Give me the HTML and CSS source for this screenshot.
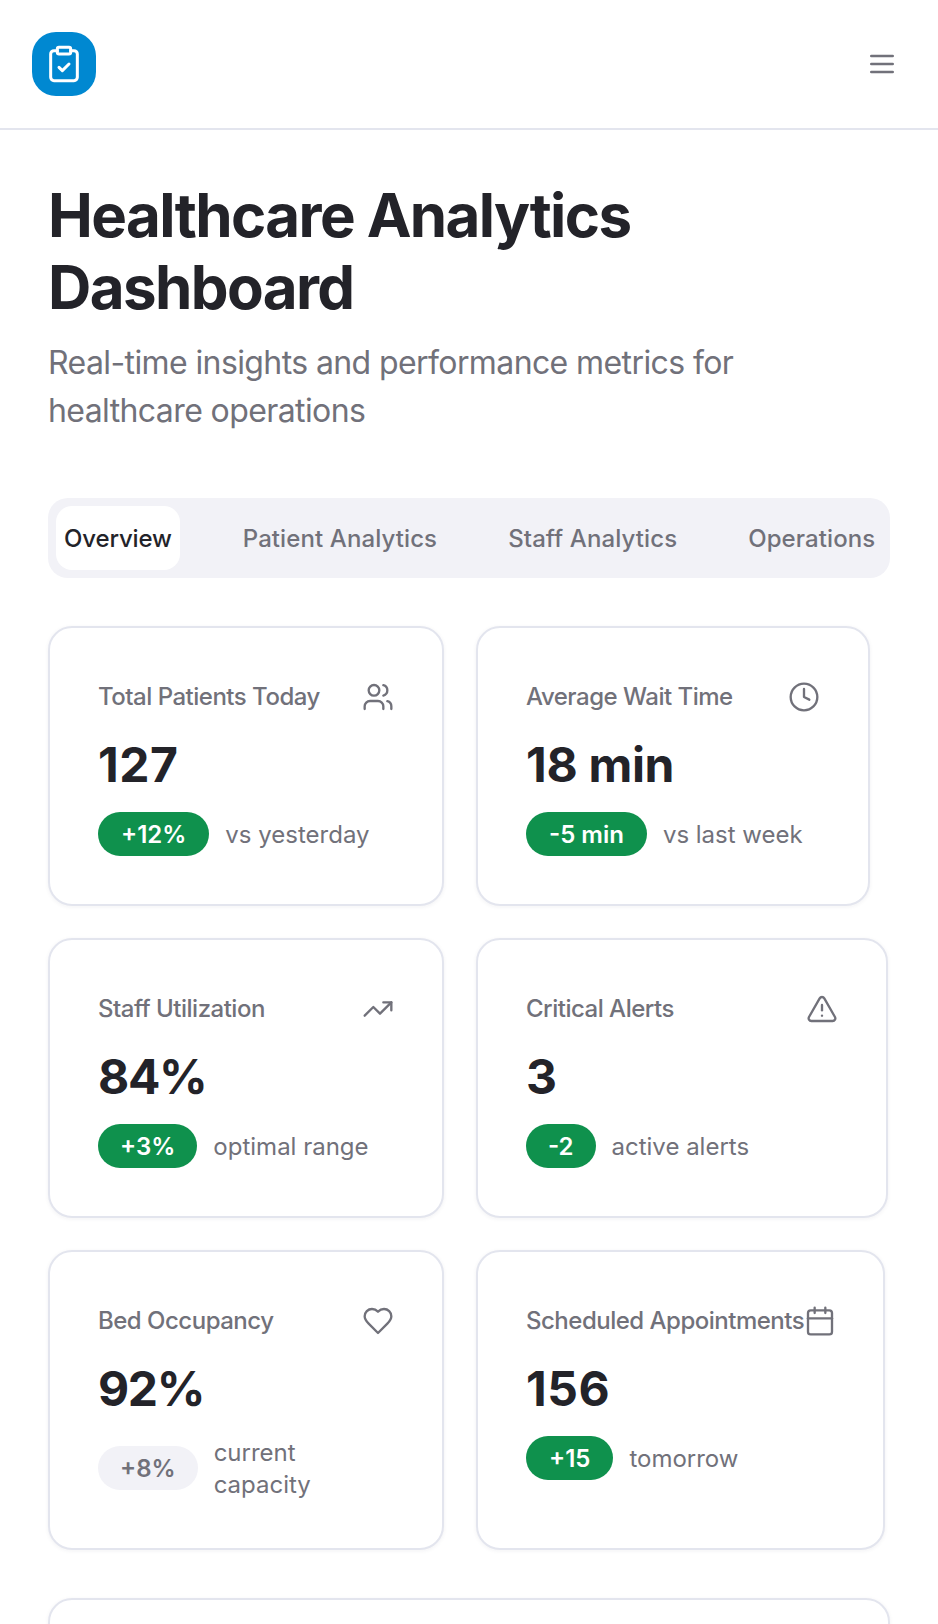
FILE: index.html
```html
<!DOCTYPE html>
<html lang="en">
<head>
<meta charset="UTF-8" />
<meta name="viewport" content="width=device-width, initial-scale=1" />
<title>Healthcare Analytics Dashboard</title>
<link rel="stylesheet" href="styles.css">
</head>
<body>

<header class="topbar">
  <div class="logo">
    <svg width="40" height="40" viewBox="0 0 24 24" fill="none" stroke="currentColor" stroke-width="1.8" stroke-linecap="round" stroke-linejoin="round">
      <rect x="8" y="2" width="8" height="4" rx="1"/>
      <path d="M16 4h2a2 2 0 0 1 2 2v14a2 2 0 0 1-2 2H6a2 2 0 0 1-2-2V6a2 2 0 0 1 2-2h2"/>
      <path d="m9 14 2 2 4-4"/>
    </svg>
  </div>
  <svg class="menu" width="32" height="32" viewBox="0 0 24 24" fill="none" stroke="currentColor" stroke-width="2" stroke-linecap="round">
    <path d="M4 6h16M4 12h16M4 18h16"/>
  </svg>
</header>

<main class="content">
  <h1>Healthcare Analytics Dashboard</h1>
  <p class="subtitle">Real-time insights and performance metrics for healthcare operations</p>

  <nav class="tabs">
    <span class="tab active">Overview</span>
    <span class="tab">Patient Analytics</span>
    <span class="tab">Staff Analytics</span>
    <span class="tab">Operations</span>
  </nav>

  <section class="stats">
    <div class="card">
      <div class="card-head">
        <span class="label">Total Patients Today</span>
        <svg class="icon" viewBox="0 0 24 24"><path d="M16 21v-2a4 4 0 0 0-4-4H6a4 4 0 0 0-4 4v2"/><circle cx="9" cy="7" r="4"/><path d="M22 21v-2a4 4 0 0 0-3-3.870"/><path d="M16 3.130a4 4 0 0 1 0 7.750"/></svg>
      </div>
      <div class="value value-num">127</div>
      <div class="trend"><span class="badge badge-wide">+12%</span><span class="note">vs yesterday</span></div>
    </div>

    <div class="card card-narrow">
      <div class="card-head">
        <span class="label">Average Wait Time</span>
        <svg class="icon" viewBox="0 0 24 24"><circle cx="12" cy="12" r="10"/><path d="M12 6v6l4 2"/></svg>
      </div>
      <div class="value">18 min</div>
      <div class="trend"><span class="badge badge-wide">-5 min</span><span class="note">vs last week</span></div>
    </div>

    <div class="card">
      <div class="card-head">
        <span class="label">Staff Utilization</span>
        <svg class="icon" viewBox="0 0 24 24"><path d="m22 7-8.500 8.500-5-5L2 17"/><path d="M16 7h6v6"/></svg>
      </div>
      <div class="value value-pct">84%</div>
      <div class="trend"><span class="badge">+3%</span><span class="note">optimal range</span></div>
    </div>

    <div class="card">
      <div class="card-head">
        <span class="label">Critical Alerts</span>
        <svg class="icon" viewBox="0 0 24 24"><path d="m21.730 18-8-14a2 2 0 0 0-3.480 0l-8 14A2 2 0 0 0 4 21h16a2 2 0 0 0 1.730-3"/><path d="M12 9v4"/><path d="M12 17h.01"/></svg>
      </div>
      <div class="value">3</div>
      <div class="trend"><span class="badge">-2</span><span class="note">active alerts</span></div>
    </div>

    <div class="card">
      <div class="card-head">
        <span class="label">Bed Occupancy</span>
        <svg class="icon" viewBox="0 0 24 24"><path d="M19 14c1.490-1.460 3-3.210 3-5.500A5.500 5.500 0 0 0 16.500 3c-1.760 0-3 .5-4.500 2-1.500-1.500-2.740-2-4.500-2A5.500 5.500 0 0 0 2 8.500c0 2.300 1.500 4.050 3 5.500l7 7Z"/></svg>
      </div>
      <div class="value value-pct">92%</div>
      <div class="trend"><span class="badge badge-muted">+8%</span><span class="note note-wrap">current capacity</span></div>
    </div>

    <div class="card card-wide">
      <div class="card-head">
        <span class="label">Scheduled Appointments</span>
        <svg class="icon" viewBox="0 0 24 24"><path d="M8 2v4"/><path d="M16 2v4"/><rect x="3" y="4" width="18" height="18" rx="2"/><path d="M3 10h18"/></svg>
      </div>
      <div class="value value-num">156</div>
      <div class="trend"><span class="badge badge-wide">+15</span><span class="note">tomorrow</span></div>
    </div>
  </section>

  <div class="card panel"></div>
</main>

</body>
</html>
```

FILE: styles.css
```css
html, body {
  height: 1624px;
  overflow: hidden;
}
body {
  margin: 0;
  background: #fff;
  color: #232329;
  font-family: Inter, "Liberation Sans", sans-serif;
}
.topbar {
  display: flex;
  justify-content: space-between;
  align-items: center;
  height: 130px;
  padding: 0 40px 0 32px;
  box-sizing: border-box;
  border-bottom: 2px solid #e3e5ee;
}
.logo {
  display: flex;
  align-items: center;
  justify-content: center;
  width: 64px;
  height: 64px;
  border-radius: 24px;
  background: #0088d1;
  color: #fff;
}
.menu {
  color: #71717a;
}
.content {
  padding: 49px 48px 0;
}
h1 {
  margin: 0 0 16px;
  font-size: 60px;
  line-height: 72px;
  font-weight: 700;
  letter-spacing: -1.6px;
}
.subtitle {
  margin: 0 0 63px;
  font-size: 32px;
  line-height: 48px;
  color: #71717a;
  letter-spacing: -0.6px;
}
.tabs {
  display: flex;
  gap: 55px;
  padding: 8px;
  border-radius: 20px;
  background: #f2f2f7;
  margin-bottom: 48px;
}
.tab {
  padding: 9px 8px 7px;
  height: 48px;
  line-height: 48px;
  font-size: 24px;
  font-weight: 500;
  color: #71717a;
  border-radius: 16px;
  white-space: nowrap;
  letter-spacing: 0.1px;
}
.tab.active {
  background: #fff;
  color: #232329;
  letter-spacing: -0.15px;
}
.stats {
  display: grid;
  grid-template-columns: 396px 412px;
  column-gap: 32px;
  row-gap: 32px;
  margin-bottom: 48px;
}
.card {
  box-sizing: border-box;
  padding: 48px;
  border: 2px solid #e3e5ee;
  border-radius: 24px;
  background: #fff;
  box-shadow: 0 1px 4px rgba(30, 30, 60, 0.06);
}
.card-narrow {
  width: 394px;
}
.card-wide {
  width: 409px;
}
.card-head {
  display: flex;
  justify-content: space-between;
  align-items: center;
  margin-bottom: 16px;
}
.label {
  font-size: 24px;
  line-height: 42px;
  font-weight: 500;
  color: #71717a;
  letter-spacing: -0.5px;
  white-space: nowrap;
}
.icon {
  flex: none;
  width: 32px;
  height: 32px;
  fill: none;
  stroke: #71717a;
  stroke-width: 1.75;
  stroke-linecap: round;
  stroke-linejoin: round;
}
.value {
  font-size: 48px;
  line-height: 62px;
  font-weight: 700;
  margin-bottom: 16px;
  letter-spacing: -0.3px;
}
.value-num {
  letter-spacing: 0.5px;
}
.value-pct {
  letter-spacing: -1.3px;
}
.trend {
  display: flex;
  align-items: center;
  gap: 16px;
}
.badge {
  padding: 0 22px;
  height: 44px;
  line-height: 46px;
  border-radius: 22px;
  background: #0f914d;
  color: #fff;
  font-size: 24px;
  font-weight: 600;
  flex: none;
}
.badge-wide {
  padding: 0 23px;
}
.badge-muted {
  background: #f2f2f7;
  color: #71717a;
}
.note {
  padding-top: 1px;
  margin-bottom: -1px;
  font-size: 24px;
  line-height: 32px;
  color: #71717a;
}
.note-wrap {
  max-width: 110px;
}
.panel {
  height: 200px;
}
```
